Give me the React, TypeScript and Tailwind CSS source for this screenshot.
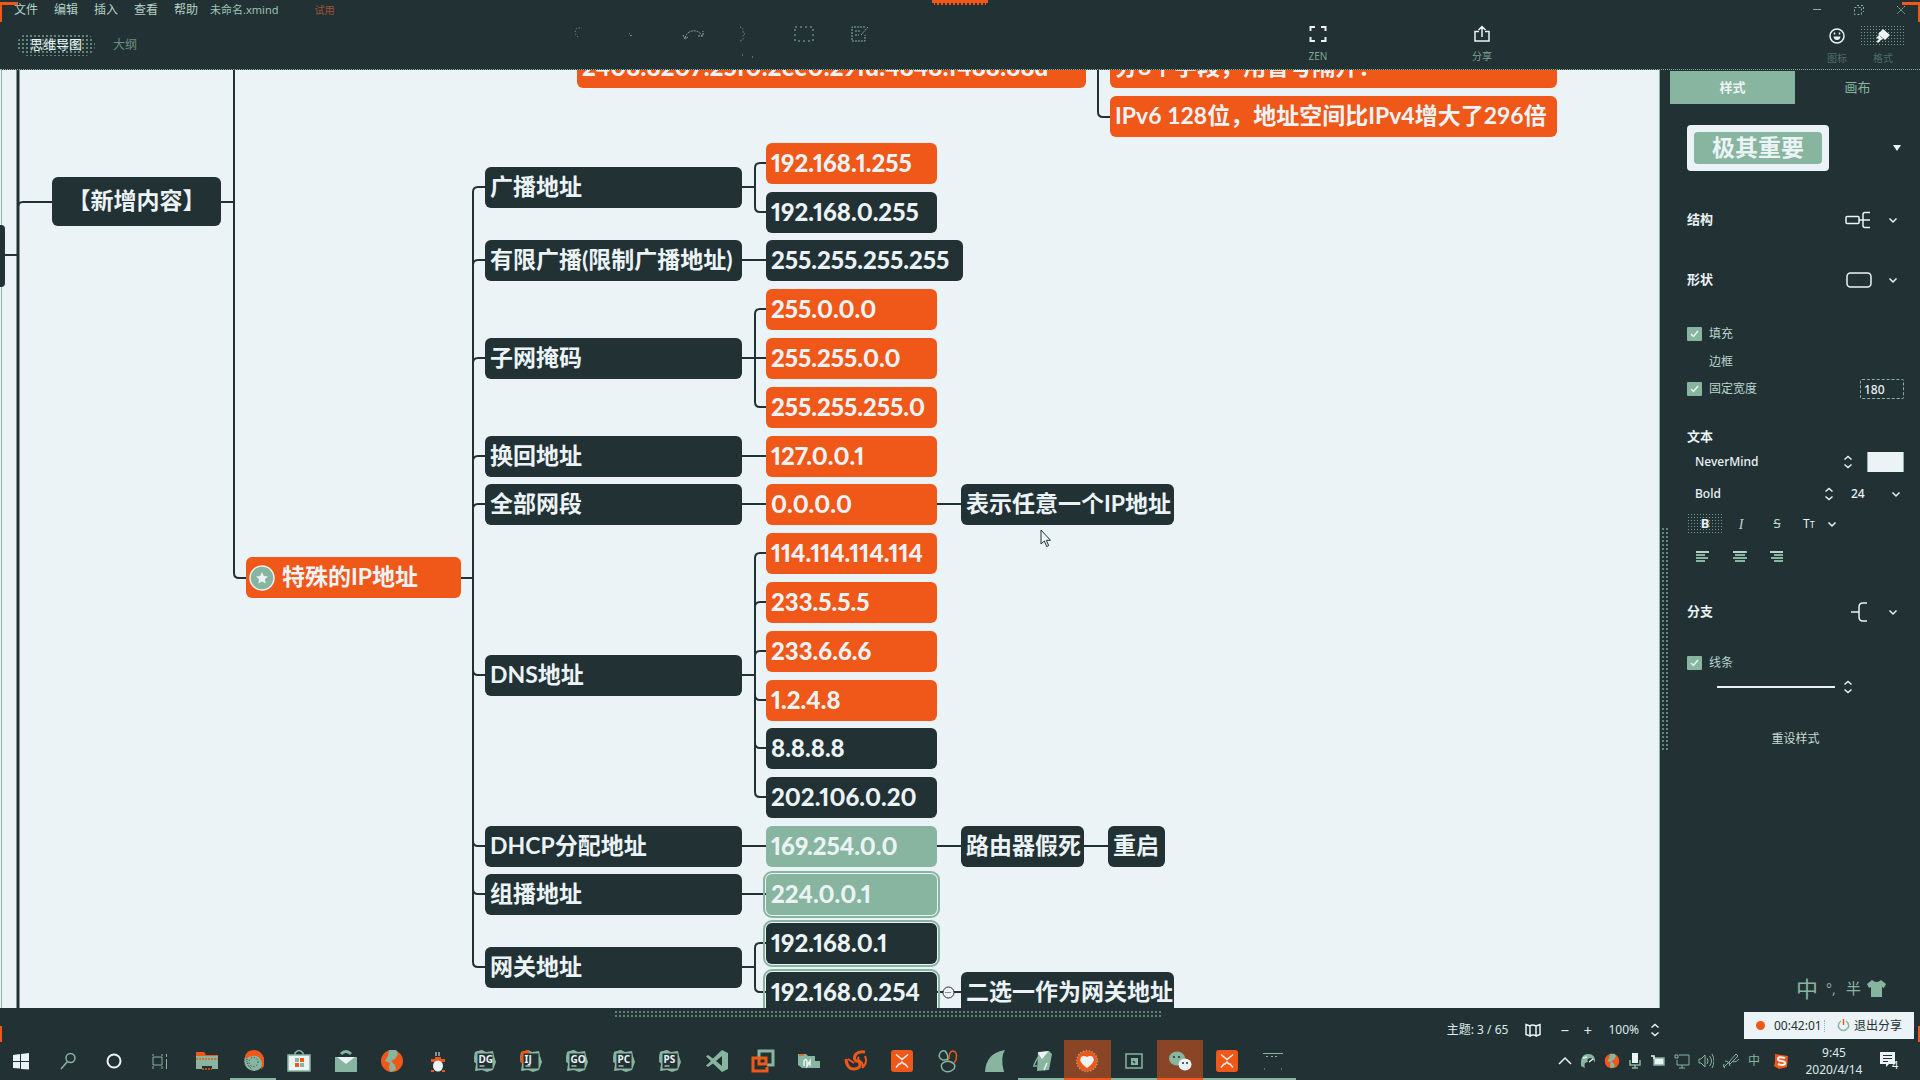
import React from "react";

const DARK = "#213134";
const LIGHT = "#ebf3f6";
const GREEN = "#87b59f";
const ORANGE = "#f05819";

type Tone = "dark" | "orange" | "green";

interface TopicNode {
  text: string;
  x: number;
  y: number;
  w: number;
  tone: Tone;
  numeric?: boolean;
  selected?: boolean;
}

const toneClass: Record<Tone, string> = {
  dark: "bg-[#213134]",
  orange: "bg-[#f05819]",
  green: "bg-[#87b59f]",
};

// y is the centre line of a topic, in canvas coordinates.
const topics: TopicNode[] = [
  { text: "广播地址", x: 485, y: 117, w: 257, tone: "dark" },
  { text: "有限广播(限制广播地址)", x: 485, y: 190, w: 257, tone: "dark" },
  { text: "子网掩码", x: 485, y: 288, w: 257, tone: "dark" },
  { text: "换回地址", x: 485, y: 386, w: 257, tone: "dark" },
  { text: "全部网段", x: 485, y: 434, w: 257, tone: "dark" },
  { text: "DNS地址", x: 485, y: 605, w: 257, tone: "dark" },
  { text: "DHCP分配地址", x: 485, y: 776, w: 257, tone: "dark" },
  { text: "组播地址", x: 485, y: 824, w: 257, tone: "dark" },
  { text: "网关地址", x: 485, y: 897, w: 257, tone: "dark" },
  { text: "192.168.1.255", x: 766, y: 93, w: 171, tone: "orange", numeric: true },
  { text: "192.168.0.255", x: 766, y: 142, w: 171, tone: "dark", numeric: true },
  { text: "255.255.255.255", x: 766, y: 190, w: 197, tone: "dark", numeric: true },
  { text: "255.0.0.0", x: 766, y: 239, w: 171, tone: "orange", numeric: true },
  { text: "255.255.0.0", x: 766, y: 288, w: 171, tone: "orange", numeric: true },
  { text: "255.255.255.0", x: 766, y: 337, w: 171, tone: "orange", numeric: true },
  { text: "127.0.0.1", x: 766, y: 386, w: 171, tone: "orange", numeric: true },
  { text: "0.0.0.0", x: 766, y: 434, w: 171, tone: "orange", numeric: true },
  { text: "114.114.114.114", x: 766, y: 483, w: 171, tone: "orange", numeric: true },
  { text: "233.5.5.5", x: 766, y: 532, w: 171, tone: "orange", numeric: true },
  { text: "233.6.6.6", x: 766, y: 581, w: 171, tone: "orange", numeric: true },
  { text: "1.2.4.8", x: 766, y: 630, w: 171, tone: "orange", numeric: true },
  { text: "8.8.8.8", x: 766, y: 678, w: 171, tone: "dark", numeric: true },
  { text: "202.106.0.20", x: 766, y: 727, w: 171, tone: "dark", numeric: true },
  { text: "169.254.0.0", x: 766, y: 776, w: 171, tone: "green", numeric: true },
  { text: "224.0.0.1", x: 766, y: 824, w: 171, tone: "green", numeric: true, selected: true },
  { text: "192.168.0.1", x: 766, y: 873, w: 171, tone: "dark", numeric: true, selected: true },
  { text: "192.168.0.254", x: 766, y: 922, w: 171, tone: "dark", numeric: true, selected: true },
  { text: "表示任意一个IP地址", x: 961, y: 434, w: 213, tone: "dark" },
  { text: "路由器假死", x: 961, y: 776, w: 123, tone: "dark" },
  { text: "重启", x: 1108, y: 776, w: 57, tone: "dark" },
  { text: "二选一作为网关地址", x: 961, y: 922, w: 213, tone: "dark" },
  { text: "2408:8207:25f0:2ee0:29fd:4848:f488:88d", x: 577, y: -3, w: 509, tone: "orange", numeric: true },
  { text: "分8个字段，用冒号隔开：", x: 1110, y: -3, w: 447, tone: "orange" },
  { text: "IPv6 128位，地址空间比IPv4增大了296倍", x: 1110, y: 46, w: 447, tone: "orange" },
];

function elbow(x0: number, x1: number, from: number, to: number) {
  const r = to > from ? 5 : -5;
  return `M${x0} ${from}V${to - r}Q${x0} ${to} ${x0 + 5} ${to}H${x1}`;
}

const links: string[] = [
  elbow(18, 52, 200, 132),
  "M221 132H234",
  elbow(234, 246, 0, 508),
  "M0 185H18",
  "M461 508H473",
  ...[117, 190, 288, 386, 434].map((y) => elbow(473, 485, 508, y)),
  ...[605, 776, 824, 897].map((y) => elbow(473, 485, 508, y)),
  "M742 117H755",
  elbow(755, 767, 117, 93),
  elbow(755, 767, 117, 142),
  "M742 190H767",
  "M742 288H767",
  elbow(755, 767, 288, 239),
  elbow(755, 767, 288, 337),
  "M742 386H767",
  "M742 434H961",
  "M742 605H755",
  ...[483, 532, 581, 630, 678, 727].map((y) => elbow(755, 767, 605, y)),
  "M742 776H1108",
  "M742 824H767",
  "M742 897H755",
  elbow(755, 767, 897, 873),
  elbow(755, 767, 897, 922),
  "M937 922H961",
  elbow(1098, 1110, -10, 47),
];

function Topic({ node }: { node: TopicNode }) {
  return (
    <div
      className={`absolute flex h-[41px] items-center rounded-[6px] px-[5px] pb-0.5 whitespace-nowrap text-[#ebf3f6] ${toneClass[node.tone]} ${
        node.numeric ? "text-[24px] font-black proportional-nums" : "text-[23px] font-bold"
      } ${node.selected ? "outline-2 outline-offset-1 outline-[#87b59f]" : ""}`}
      style={{ left: node.x, top: node.y - 20, width: node.w }}
    >
      {node.text}
    </div>
  );
}

function Canvas() {
  return (
    <main className="relative min-w-0 flex-1 overflow-hidden border-r border-[#87b59f] bg-[#ebf3f6] font-['Lato','Noto_Sans_CJK_SC',sans-serif]">
      <svg className="absolute top-0 left-0 h-full w-full" fill="none" stroke={DARK} strokeWidth="2">
        <path d="M1.500 0V940" stroke={GREEN} strokeWidth="1" />
        <path d="M18 0V940" strokeWidth="3" />
        {links.map((d) => (
          <path key={d} d={d} />
        ))}
      </svg>
      <div className="absolute top-[155px] left-0 h-[62px] w-[5px] rounded-r-[4px] bg-[#213134]" />
      <div className="absolute top-[107px] left-[52px] flex h-[49px] w-[169px] items-center justify-center rounded-[6px] bg-[#213134] pb-0.5 text-[23px] font-bold whitespace-nowrap text-[#ebf3f6]">
        【新增内容】
      </div>
      <div className="absolute top-[487px] left-[246px] flex h-[41px] w-[215px] items-center gap-[7px] rounded-[6px] bg-[#f05819] px-[3px] text-[23px] font-bold whitespace-nowrap text-[#ebf3f6]">
        <svg width="26" height="26" viewBox="0 0 26 26">
          <circle cx="13" cy="13" r="12" fill={GREEN} stroke={LIGHT} strokeWidth="1.500" />
          <path d="M13 7l1.800 3.900 4.200.5-3.100 2.900.8 4.200-3.700-2.100-3.700 2.100.8-4.200L7 11.400l4.200-.5z" fill={LIGHT} />
        </svg>
        <span className="pb-0.5">特殊的IP地址</span>
      </div>
      {topics.map((node) => (
        <Topic key={node.text} node={node} />
      ))}
      <svg className="absolute top-[916px] left-[942px]" width="13" height="13" viewBox="0 0 13 13">
        <circle cx="6.500" cy="6.500" r="5.500" fill={LIGHT} stroke={DARK} />
        <path d="M3.500 6.500h6" stroke={DARK} strokeDasharray="1 1" />
      </svg>
      <svg className="absolute top-[459px] left-[1040px]" width="12" height="19" viewBox="0 0 12 19">
        <path d="M1 1v14l3.300-3 2.400 5.500 2-.9-2.400-5.300H10.500z" fill={LIGHT} stroke={DARK} />
      </svg>
    </main>
  );
}

function Header() {
  return (
    <header className="flex h-[70px] shrink-0 flex-col border-b border-dotted border-[#87b59f]">
      <div className="flex h-[20px] items-center text-[12px] text-[#b4d2c6]">
        <nav className="ml-[14px] flex gap-4">
          {["文件", "编辑", "插入", "查看", "帮助"].map((item) => (
            <button key={item} className="w-6 whitespace-nowrap">
              {item}
            </button>
          ))}
        </nav>
        <span className="ml-3 text-[11px] text-[#9cc3b2]">未命名.xmind</span>
        <span className="ml-9 text-[10px] text-[#a5512d]">试用</span>
        <div className="ml-auto flex gap-[30px] pr-[13px]">
          <button aria-label="最小化">
            <svg width="12" height="12" fill="none" stroke={GREEN}><path d="M2 5.500h8" /></svg>
          </button>
          <button aria-label="还原">
            <svg width="12" height="12" fill="none" stroke={GREEN} strokeDasharray="2 2"><path d="M1.500 3.500h7v7h-7zM4 1.500h6.500V8" /></svg>
          </button>
          <button aria-label="关闭">
            <svg width="12" height="12" fill="none" stroke={GREEN} strokeDasharray="2 1"><path d="M2 2l8 8M10 2l-8 8" /></svg>
          </button>
        </div>
      </div>
      <div className="flex flex-1 items-start">
        <div className="mt-[14px] flex items-center text-[13px]">
          <button className="ml-[17px] h-[22px] w-[78px] rounded-full bg-[radial-gradient(#5f8677_1px,transparent_1px)] bg-[size:4px_4px] whitespace-nowrap text-[#ebf3f6]">
            思维导图
          </button>
          <button className="ml-[18px] text-[12px] text-[#6a9182]">大纲</button>
        </div>
        <div className="mt-[6px] ml-[436px] flex" aria-hidden="true">
          <svg width="300" height="34" viewBox="0 0 300 34" fill="none" stroke={GREEN} strokeWidth="1" strokeDasharray="1 2">
            <path d="M5 11Q0 7 4 2h5M56 7l3 3M57 10l2-2" />
            <path d="M112 12A9 9 0 0 1 129 10" strokeDasharray="2 1" />
            <path d="M125 10h5V5M110 9l2 4 3-2" strokeDasharray="2 1" />
            <path d="M167 1q4 1 3 4 0 3 2 3-2 0-2 3 1 3-3 4" />
            <path d="M222 1h18v14h-18z" strokeDasharray="2 3" />
            <path d="M292 1h-13v14h13v-6M282 5h6M282 9h4M288 9l7-8" strokeDasharray="2 1" />
            <path d="M169 29h1M179 31h1" />
          </svg>
        </div>
        <div className="mt-[5px] ml-auto flex text-[10px] leading-[14px] text-[#7ba693]">
          <button className="mr-[134px] flex w-[30px] flex-col items-center gap-1.5">
            <svg width="18" height="18" viewBox="0 0 18 18" fill="none" stroke={LIGHT} strokeWidth="2"><path d="M1.500 6V2H6M12 2h4.500v4M16.500 12v4H12M6 16H1.500v-4" /></svg>
            ZEN
          </button>
          <button className="mr-[317px] flex w-[30px] flex-col items-center gap-1.5">
            <svg width="18" height="18" viewBox="0 0 18 18" fill="none" stroke={LIGHT} strokeWidth="1.500"><path d="M6 6.500H2V16h14V6.500h-4M9 12V2M5.500 5L9 1.500 12.500 5" /></svg>
            分享
          </button>
          <button className="flex w-[46px] flex-col items-center gap-1 text-[#4d6d64]">
            <svg width="22" height="22" viewBox="0 0 22 22" fill="none" stroke={LIGHT} strokeWidth="1.500"><circle cx="11" cy="11" r="7" /><path d="M7.500 11.500h7q-.5 3.500-3.500 3.500t-3.500-3.500z" fill={LIGHT} stroke="none" /><path d="M8.500 7.500v2M13.500 7.500v2" /></svg>
            图标
          </button>
          <button className="mr-3.5 flex w-[46px] flex-col items-center gap-1 text-[#4d6d64]">
            <span className="flex h-[22px] w-full items-center justify-center bg-[radial-gradient(#6f9a87_1px,transparent_1px)] bg-[size:3px_3px]">
              <svg width="16" height="16" viewBox="0 0 16 16" fill={LIGHT}><path d="M8 1l7 6-5 5-7-6zM5 8l3 3-2 1-3 3-1.500-1.500L4 11l-3-1 3-3z" /></svg>
            </span>
            格式
          </button>
        </div>
      </div>
    </header>
  );
}

function Chevron() {
  return (
    <svg width="10" height="10" viewBox="0 0 10 10" fill="none" stroke={LIGHT} strokeWidth="1.500">
      <path d="M1.500 3.500L5 7l3.500-3.500" />
    </svg>
  );
}

function UpDown() {
  return (
    <svg width="10" height="14" viewBox="0 0 10 14" fill="none" stroke={LIGHT} strokeWidth="1.500">
      <path d="M1.500 4.500L5 1.500l3.500 3M1.500 9.500l3.500 3 3.500-3" />
    </svg>
  );
}

function Check({ id, label, checked = false }: { id: string; label: string; checked?: boolean }) {
  return (
    <div className="relative flex h-5 items-center gap-[7px]">
      <input
        id={id}
        type="checkbox"
        defaultChecked={checked}
        className="peer h-[14px] w-[15px] appearance-none rounded-[1px] checked:bg-[#87b59f]"
      />
      <svg
        className="pointer-events-none absolute top-[3px] left-0 hidden peer-checked:block"
        width="15"
        height="14"
        viewBox="0 0 15 14"
        fill="none"
        stroke={LIGHT}
        strokeWidth="1.500"
      >
        <path d="M4 7l2.500 2.500L11 4" />
      </svg>
      <label htmlFor={id} className="text-[#b9d6cb]">
        {label}
      </label>
    </div>
  );
}

function Section({ title, children }: { title: string; children?: React.ReactNode }) {
  return (
    <div className="flex h-5 items-center">
      <h3 className="flex-1 text-[13px] font-bold text-[#ebf3f6]">{title}</h3>
      {children}
    </div>
  );
}

function Panel() {
  return (
    <aside className="flex w-[260px] shrink-0 text-[12px] text-[#ebf3f6]">
      <div className="w-[10px] shrink-0 pt-[457px] pl-px">
        <div className="h-[225px] w-[7px] bg-[radial-gradient(#5f8677_1px,transparent_1px)] bg-[size:4px_4px]" />
      </div>
      <div className="flex-1 pt-px">
        <div className="flex h-[33px] text-[13px]">
          <button className="flex-1 bg-[#87b59f] font-bold">样式</button>
          <button className="flex-1 text-[#87b59f]">画布</button>
        </div>
        <div className="pr-4 pl-[17px]">
          <div className="mt-[21px] flex items-center justify-between">
            <button className="flex h-[46px] w-[142px] items-center justify-center rounded-[4px] bg-[#ebf3f6]">
              <span className="flex h-8 w-32 items-center justify-center rounded-[4px] bg-[#87b59f] pb-0.5 text-[23px] font-bold">极其重要</span>
            </button>
            <button aria-label="更多样式" className="mr-[3px]">
              <svg width="8" height="8" fill={LIGHT}><path d="M0 1h8L4 7z" /></svg>
            </button>
          </div>
          <div className="mt-[39px]">
            <Section title="结构">
              <button aria-label="结构" className="flex items-center gap-[17px] pr-1.5">
                <svg width="26" height="18" viewBox="0 0 26 18" fill="none" stroke={LIGHT} strokeWidth="1.500">
                  <rect x="1" y="5.500" width="13" height="7" rx="1" />
                  <path d="M14 9h11M25 1.500h-5q-2 0-2 2v11q0 2 2 2h5" />
                </svg>
                <Chevron />
              </button>
            </Section>
          </div>
          <div className="mt-10">
            <Section title="形状">
              <button aria-label="形状" className="flex items-center gap-4 pr-1.5">
                <svg width="26" height="16" viewBox="0 0 26 16" fill="none" stroke={LIGHT} strokeWidth="1.500">
                  <rect x="1" y="1" width="24" height="14" rx="3.500" />
                </svg>
                <Chevron />
              </button>
            </Section>
          </div>
          <div className="mt-[34px]">
            <Check id="fill" label="填充" checked />
          </div>
          <div className="mt-2">
            <Check id="border" label="边框" />
          </div>
          <div className="mt-[7px] flex justify-between">
            <Check id="fixed" label="固定宽度" checked />
            <input
              aria-label="宽度"
              defaultValue="180"
              className="h-5 w-11 rounded-[2px] border border-dashed border-[#87b59f] bg-transparent px-[3px] font-medium"
            />
          </div>
          <div className="mt-7">
            <Section title="文本" />
          </div>
          <div className="mt-[5px] flex h-5 items-center pl-2 font-medium">
            <select aria-label="字体" className="flex-1 appearance-none bg-transparent">
              <option>NeverMind</option>
            </select>
            <UpDown />
            <input type="text" readOnly aria-label="文字颜色" className="ml-3.5 h-5 w-[37px] border-x border-[#87b59f] bg-[#ebf3f6]" />
          </div>
          <div className="mt-3 flex h-5 items-center pl-2 font-medium">
            <select aria-label="字重" className="w-[129px] appearance-none bg-transparent">
              <option>Bold</option>
            </select>
            <UpDown />
            <select aria-label="字号" className="ml-[17px] w-[40px] appearance-none bg-transparent">
              <option>24</option>
            </select>
            <Chevron />
          </div>
          <div className="mt-[9px] flex h-[22px] items-center">
            <button className="h-full w-9 bg-[radial-gradient(#6f9a87_1px,transparent_1px)] bg-[size:3px_3px] text-[13px] font-bold">B</button>
            <button className="w-9 font-['Liberation_Serif',serif] text-[14px] text-[#b9d6cb] italic">I</button>
            <button className="w-9 text-[13px] text-[#b9d6cb] line-through">S</button>
            <button className="ml-2 flex w-[34px] items-center justify-between whitespace-nowrap">
              <span>T<span className="text-[9px]">T</span></span>
              <Chevron />
            </button>
          </div>
          <div className="mt-3 flex h-5 items-center gap-[23px] pl-[9px]">
            {["M0 1h13M0 4h9M0 7h12M0 10h9", "M0 1h14M2 4h10M0 7h14M2 10h10", "M0 1h13M4 4h9M1 7h12M4 10h9"].map((d, i) => (
              <button key={d} aria-label={["左对齐", "居中", "右对齐"][i]}>
                <svg width="14" height="12" fill="none" stroke={GREEN} strokeWidth="2"><path d={d} /><path d="M0 1h13" stroke={LIGHT} strokeWidth="1" /></svg>
              </button>
            ))}
          </div>
          <div className="mt-[35px]">
            <Section title="分支">
              <button aria-label="分支" className="flex items-center gap-[21px] pr-1.5">
                <svg width="16" height="20" viewBox="0 0 16 20" fill="none" stroke={LIGHT} strokeWidth="1.500">
                  <path d="M0 10h8M16 1h-4q-4 0-4 4v10q0 4 4 4h4" />
                </svg>
                <Chevron />
              </button>
            </Section>
          </div>
          <div className="mt-[31px]">
            <Check id="line" label="线条" checked />
          </div>
          <button aria-label="线条样式" className="mt-1 ml-[30px] flex h-5 items-center gap-2">
            <span className="h-0.5 w-[118px] bg-[#ebf3f6]" />
            <UpDown />
          </button>
          <div className="mt-8 flex h-5 justify-center">
            <button className="text-[#c5ddd5]">重设样式</button>
          </div>
        </div>
      </div>
    </aside>
  );
}

function StatusBar() {
  return (
    <footer className="relative flex h-8 shrink-0 items-center text-[12px] text-[#dcebe8]">
      <div className="absolute top-0.5 left-[614px] h-2 w-[547px] bg-[radial-gradient(#5f8677_1px,transparent_1px)] bg-[size:4px_4px]" />
      <div className="mr-[260px] ml-auto flex items-center pt-3">
        <span>主题: 3 / 65</span>
        <svg className="ml-[17px]" width="16" height="14" viewBox="0 0 16 14" fill="none" stroke={LIGHT} strokeWidth="1.500">
          <path d="M1 1.500l4 1.500v10L1 11.500zM5 3q2-2 6 0v10q-3-2-6 0M11 3l4-1.500v10L11 13" />
        </svg>
        <button className="ml-[19px] w-2 text-[15px] leading-4">−</button>
        <button className="ml-[15px] w-2 text-[15px] leading-4">+</button>
        <button className="ml-[17px] flex items-center gap-[11px]">
          100% <UpDown />
        </button>
      </div>
    </footer>
  );
}

function JetBrains({ text, accent = GREEN }: { text: string; accent?: string }) {
  return (
    <svg width="24" height="24" viewBox="0 0 24 24">
      <path d="M2 3l7-2 4 2 7-1 1 5 2 6-3 8-6 2-5-2-7 1 1-7-2-6z" fill={GREEN} />
      <path d="M2 3l7-2 2 3-6 5v6l-4-2z" fill={accent} />
      <rect x="4.500" y="4.500" width="15" height="15" fill={DARK} />
      <text x="5.500" y="13.500" fontSize="10" fontWeight="bold" fill={LIGHT}>{text}</text>
      <path d="M6.500 17h5" stroke={LIGHT} />
    </svg>
  );
}

function XMind() {
  return (
    <svg width="24" height="24" viewBox="0 0 24 24" fill="none" stroke={LIGHT} strokeWidth="1.500">
      <rect x="1" y="1" width="22" height="22" rx="3" fill={ORANGE} stroke="none" />
      <path d="M6 5.500l6 5 6-5M6 18.500l3-3.500h1l2-2 2 2h1l3 3.500" />
    </svg>
  );
}

function Ball({ size = 24 }: { size?: number }) {
  return (
    <svg width={size} height={size} viewBox="0 0 24 24">
      <circle cx="12" cy="12" r="11" fill={ORANGE} />
      <path d="M9 1l7 0 2 4-3 5-4 2 4 4 1 5-6 2-1-5 1-4-5-2 3-5z" fill={GREEN} />
    </svg>
  );
}

interface Task {
  label: string;
  icon: React.ReactNode;
  open?: boolean;
  alert?: boolean;
}

function g(children: React.ReactNode) {
  return (
    <svg width="24" height="24" viewBox="0 0 24 24" fill="none" stroke={GREEN} strokeWidth="1.500">
      {children}
    </svg>
  );
}

const tasks: Task[] = [
  { label: "开始", icon: g(<path d="M4 6l7-1v7H4zM12 5l8-1v8h-8zM4 13h7v6.500L4 19zM12 13h8v7.500L12 20z" fill={LIGHT} stroke="none" />) },
  { label: "搜索", icon: g(<path d="M5 20l6-7M10 9a4.500 4.500 0 1 0 9 0a4.500 4.500 0 1 0-9 0" />) },
  { label: "Cortana", icon: g(<circle cx="12" cy="12" r="6.500" stroke={LIGHT} strokeWidth="2" />) },
  { label: "任务视图", icon: g(<path d="M5 8h9v8H5zM5 5v2M14 5v2M5 17v3M14 17v3M18.500 5v3M18.500 10v10" strokeWidth="1" />) },
  { label: "文件资源管理器", icon: g(<><path d="M1 3h8l2 3h12v4H1z" fill={ORANGE} stroke="none" /><path d="M1 7h22v13h-6v-3H7v3H1z" fill={GREEN} stroke="none" /><path d="M1 10h22M7 20h10" stroke={ORANGE} strokeDasharray="2 1" /></>) },
  { label: "浏览器", open: true, icon: g(<><circle cx="13" cy="12" r="10" fill={GREEN} stroke="none" /><path d="M4 7q2-6 9-6 7 0 10 8v8l-3 4q2-7 0-10-3-5-8-4-4 0-7 3z" fill={ORANGE} stroke="none" /><circle cx="12.500" cy="13" r="4.500" stroke={DARK} strokeWidth="1" strokeDasharray="1 2" /><path d="M3 11q0 8 7 11M6 10q-1 6 5 10" stroke={DARK} strokeWidth="1" strokeDasharray="1 1" /></>) },
  { label: "应用商店", icon: g(<><path d="M8 7V4q4-5 8 0v3" /><path d="M1 6h22v16H1z" fill={LIGHT} stroke={GREEN} /><path d="M8 9h4v4H8zM13 14h4v4h-4z" fill={GREEN} stroke="none" /><path d="M13 9h4v4h-4zM8 14h4v4H8z" fill={ORANGE} stroke="none" /></>) },
  { label: "邮件", icon: g(<><path d="M7 5q5-5 10 0" strokeWidth="3" /><path d="M1 8h22v15H1z" fill={GREEN} stroke="none" /><path d="M3 8h18l-9 7z" fill={LIGHT} stroke="none" /></>) },
  { label: "地球", icon: <Ball /> },
  { label: "机器人", icon: g(<><path d="M10 3v4M13 3v4" stroke={LIGHT} strokeWidth="1" /><path d="M9 8h6v2h4v3H5v-3h4z" fill={ORANGE} stroke="none" /><ellipse cx="12" cy="17" rx="5" ry="5.500" fill={LIGHT} stroke="none" /><path d="M5 22h3M16 22h3" stroke={ORANGE} strokeWidth="2" /></>) },
  { label: "DataGrip", icon: <JetBrains text="DG" /> },
  { label: "IntelliJ IDEA", icon: <JetBrains text="IJ" accent={ORANGE} /> },
  { label: "GoLand", icon: <JetBrains text="GO" /> },
  { label: "PyCharm", icon: <JetBrains text="PC" /> },
  { label: "PhpStorm", icon: <JetBrains text="PS" /> },
  { label: "Visual Studio Code", icon: g(<path d="M17 1l6 3v16l-6 3L8 14.500 3 18l-2-1.500L6 12 1 7.500 3 6l5 3.500zM17 7l-6 5 6 5z" fill={GREEN} fillRule="evenodd" stroke="none" />) },
  { label: "虚拟机", icon: g(<><path d="M8 8V2h14v14h-6" strokeWidth="3" /><path d="M8 9H2v13h14v-4M8 9v6h7V9z" stroke={ORANGE} strokeWidth="3" /></>) },
  { label: "网络文件夹", icon: g(<><path d="M1 5h8l2 2h7v5l5 0v7H5l-4-3z" fill={GREEN} stroke="none" /><path d="M7 17v-5q2-3 3 0v5l3-5v5" stroke={LIGHT} /><path d="M2 6h5" stroke={ORANGE} /></>) },
  { label: "火狐", icon: g(<><path d="M2 10q1 11 9 10 6-1 5-6-1-2-4-2-3-3 0-7 3-3 9-2" stroke={ORANGE} strokeWidth="3" /><path d="M15 8q-2 2 1 4 3 2 3 6M21 7q3 7-3 12M4 10l6 4" stroke={ORANGE} strokeWidth="2" /></>) },
  { label: "XMind 8", icon: <XMind /> },
  { label: "三环", icon: g(<><path d="M12 10Q5 13 3 7q1-6 6-5 3 3 3 8zM12 12q9 2 6 8-6 5-11 1-5-7 5-9z" /><path d="M13 10q0-8 4-8 5 1 3 9l-2 3" stroke={ORANGE} /></>) },
  { label: "Wireshark", icon: g(<path d="M2 23Q3 4 22 1q-5 7-1 22z" fill={GREEN} stroke="none" />) },
  { label: "记事本", open: true, icon: g(<><path d="M9 3l11-1 3 3-3 16-12 1z" fill={GREEN} stroke="none" /><path d="M10 4l8-1-5 6zM18 14l-3 7" fill={LIGHT} stroke={LIGHT} /><path d="M9 8l-4 8M8 17H4" /></>) },
  { label: "直播", open: true, alert: true, icon: g(<><circle cx="12" cy="12" r="10.500" fill={ORANGE} stroke={GREEN} strokeDasharray="1 2" /><path d="M12 19q-9-6-6-11 3-2 6 0 3-2 6 0 3 5-6 11z" fill={LIGHT} stroke="none" /></>) },
  { label: "虚拟终端", open: true, icon: g(<><path d="M4 5h16v14H4z" /><path d="M9 9h7v7H9z" fill={GREEN} stroke="none" /><path d="M11 12l2 2" stroke={DARK} /></>) },
  { label: "微信", open: true, alert: true, icon: g(<><ellipse cx="9" cy="9.500" rx="8" ry="7" fill={GREEN} stroke="none" /><ellipse cx="17" cy="15.500" rx="6.500" ry="6" fill={LIGHT} stroke="none" /><path d="M6 7v2M11 7v2M15 13v2M19 13v2" stroke={DARK} /></>) },
  { label: "XMind ZEN", open: true, icon: <XMind /> },
  { label: "终端", open: true, icon: g(<path d="M2 4.500h20M5 7.500h2M10 7.500h2M14 7.500h2M3 20h1M20 20h1" strokeWidth="1" />) },
];

function t(width: number, children: React.ReactNode) {
  return (
    <svg width={width} height="16" viewBox={`0 0 ${width} 16`} fill="none" stroke={GREEN} strokeWidth="1.500">
      {children}
    </svg>
  );
}

function Taskbar() {
  return (
    <div className="flex h-10 shrink-0 items-stretch">
      <div className="-ml-0.5 flex w-[1298px] items-stretch">
        {tasks.map((task) => (
          <button
            key={task.label}
            aria-label={task.label}
            className={`flex flex-1 items-center justify-center border-b-2 pt-[3px] ${
              task.alert
                ? "border-[#f05819] bg-[#8a4426]"
                : task.open
                  ? "border-[#87b59f]"
                  : "border-transparent"
            }`}
          >
            {task.icon}
          </button>
        ))}
      </div>
      <div className="ml-auto flex items-center gap-2 pt-0.5 pr-5 text-[12px] text-[#dcebe8]">
        {t(14, <path d="M1 11l6-6 6 6" stroke={LIGHT} />)}
        {t(16, <><path d="M1 13Q0 1 8 1q8 0 7 9-2-5-5-5-4 1-2 4-5 0-3 6z" fill={GREEN} stroke="none" /><path d="M3 5l4-1M9 9l4-3" stroke={LIGHT} /></>)}
        <Ball size={16} />
        {t(14, <><rect x="4" y="0" width="6" height="10" fill={LIGHT} stroke="none" /><path d="M2 7v5h10V7M7 12v3M4 15h6" /></>)}
        {t(16, <><rect x="4" y="5" width="10" height="7" fill={LIGHT} stroke={GREEN} /><path d="M1 3h3v3" stroke={LIGHT} /></>)}
        {t(16, <path d="M5 2h10v10H3V7M1 2h3v3H1zM8 12v3M5 15h6" strokeWidth="1" />)}
        {t(16, <path d="M1 6h2l4-4v12l-4-4H1zM9 5q2 3 0 6M11.500 3q4 5 0 10M14 1q4 7 0 14" strokeWidth="1" />)}
        {t(18, <path d="M2 14l5-5M7 9l7-8 2 2-8 8zM3 8q4 0 5 5M11 9q4 0 6-3M2 11q-2 3 1 4" strokeWidth="1" />)}
        <span className="w-[14px] text-[#87b59f]">中</span>
        {t(22, <><path d="M5 1l13 2-1 11-8 2-5-3 1-4z" fill={ORANGE} stroke="none" /><path d="M15 5q-7-2-7 1 0 2 4 2 4 1 3 3-2 2-7 0" stroke={LIGHT} strokeWidth="2" /></>)}
        <div className="flex w-[68px] flex-col items-center leading-[17px]">
          <span>9:45</span>
          <span>2020/4/14</span>
        </div>
        <svg className="ml-1" width="20" height="26" viewBox="0 0 20 26">
          <path d="M0 4h15v12h-6l-3 3v-3H0z" fill={LIGHT} />
          <path d="M3 7.500h9M3 10.500h9M3 13.500h5" stroke={DARK} />
          <text x="12" y="21" fontSize="11" fill={LIGHT}>4</text>
        </svg>
      </div>
    </div>
  );
}

function Overlays() {
  return (
    <>
      <div className="absolute top-0.5 left-0 h-5 w-[18px] border-t-3 border-l-2 border-[#f05819]" />
      <div className="absolute top-0.5 right-0 h-5 w-[18px] border-t-3 border-r-2 border-[#f05819]" />
      <div className="absolute bottom-[38px] left-0 h-4 w-0.5 bg-[#f05819]" />
      <div className="absolute right-0 bottom-[38px] h-4 w-0.5 bg-[#f05819]" />
      <div className="absolute top-0 left-[932px] h-[5px] w-14 border-b-2 border-dotted border-[#213134] bg-[#f05819]" />
      <div className="absolute right-[34px] bottom-[78px] flex h-7 items-center text-[#87b59f]">
        <span className="text-[22px] leading-7">中</span>
        <span className="ml-2 w-5 text-[14px]">°,</span>
        <span className="text-[15px]">半</span>
        <svg className="ml-1.5" width="19" height="17" viewBox="0 0 19 17" fill={GREEN}><path d="M5 0q4.500 4 9 0l5 4-2 4-2-1v10H4V7L2 8 0 4z" /></svg>
      </div>
      <div className="absolute right-1.5 bottom-[41px] flex h-[27px] w-[170px] items-center bg-[#ebf3f6] pl-3 text-[12px] text-[#213134]">
        <span className="h-[9px] w-[9px] rounded-full bg-[#f05819]" />
        <span className="ml-[9px] w-[46px] whitespace-nowrap">00:42:01</span>
        <span className="ml-1 h-3 border-l border-dotted border-[#87b59f]" />
        <button className="ml-3 flex items-center gap-1 text-[12px] whitespace-nowrap">
          <svg width="13" height="13" viewBox="0 0 13 13" fill="none" stroke={GREEN} strokeWidth="1.500"><path d="M4 2q-4 3-2 7 4 5 9 0 2-4-2-7" /><path d="M6.500 0v6" stroke={ORANGE} /></svg>
          退出分享
        </button>
      </div>
    </>
  );
}

export default function App() {
  return (
    <div className="relative flex h-screen flex-col overflow-hidden bg-[#213134] font-['Noto_Sans','Noto_Sans_CJK_SC',sans-serif] text-[#ebf3f6]">
      <Header />
      <div className="flex min-h-0 flex-1">
        <Canvas />
        <Panel />
      </div>
      <StatusBar />
      <Taskbar />
      <Overlays />
    </div>
  );
}
